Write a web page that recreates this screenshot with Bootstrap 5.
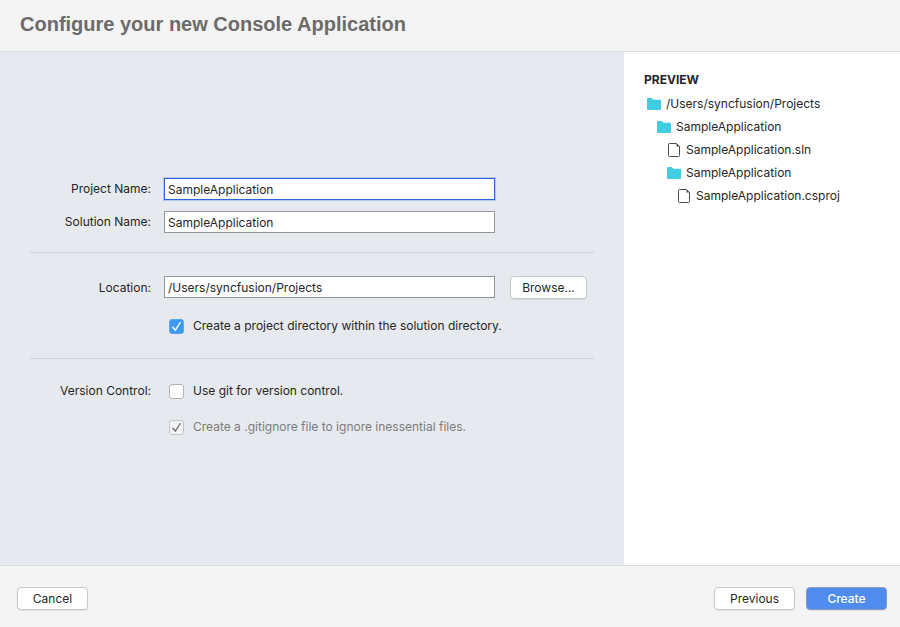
<!DOCTYPE html>
<html lang="en">
<head>
<meta charset="utf-8">
<meta name="viewport" content="width=device-width, initial-scale=1">
<title>Configure your new Console Application</title>
<link href="https://cdn.jsdelivr.net/npm/bootstrap@5.3.0/dist/css/bootstrap.min.css" rel="stylesheet">
<style>
  body { font-family: Inter, "Liberation Sans", sans-serif; font-size: 12px; line-height: 18px; color: #262626; background: #f4f4f4; }
  .wizard-head { padding: 12px 20px 15px; border-bottom: 1px solid #dcdee1; }
  .wizard-title { font-family: "Liberation Sans", sans-serif; font-size: 20px; line-height: 24px; color: #6b6b6b; }
  .settings { background: #e6e9ee; padding: 0 30px 3px; }
  .preview { background: #fff; width: 276px; padding: 18px 20px; }
  .preview-title { font-size: 12px; line-height: 20px; margin-bottom: 2px; }
  .rule { height: 1px; background: #cfd2d7; }
  .gap-field { gap: 11px; }
  .field-label { width: 121px; margin-right: 13px; text-align: right; }
  .side { width: 77px; margin: 0 7px 0 15px; }
  .field { height: 22px; padding: 0 3px; border: 1px solid #959595; border-radius: 0; font-size: 12px; line-height: 18px; color: #262626; }
  .field:focus, .field.active { border-color: #2b66d9; box-shadow: 0 0 0 1px #b4c8ec; color: #262626; }
  .mac-btn { height: 23px; padding: 0; border: 1px solid #c8c8c8; border-radius: 4px; background: #fff; font-size: 12px; line-height: 20px; color: #262626; box-shadow: 0 1px 1px rgba(0,0,0,.08); }
  .mac-btn.primary { background: #4f8cee; border-color: #8c9cb8; color: #fff; font-weight: 500; }
  .tick-row { gap: 9px; padding-left: 5px; }
  .form-check-input.tick { width: 15px; height: 15px; margin: 0; border: 1px solid #b3b3b3; border-radius: 3px; background-color: #fff; background-size: 15px 15px; }
  .form-check-input.tick:checked { border-color: #5ba7ee; background-color: #3d9af4; background-image: url("data:image/svg+xml,%3Csvg xmlns='http://www.w3.org/2000/svg' viewBox='0 0 15 15'%3E%3Cpath d='M3.800 8.200l2.600 3L11.200 3.500' fill='none' stroke='%23fff' stroke-width='1.4' stroke-linecap='round' stroke-linejoin='round'/%3E%3C/svg%3E"); }
  .form-check-input.tick:disabled { opacity: 1; border-color: #c6c6c8; background-color: #f2f3f4; background-image: url("data:image/svg+xml,%3Csvg xmlns='http://www.w3.org/2000/svg' viewBox='0 0 15 15'%3E%3Cpath d='M3.800 8.200l2.600 3L11.200 3.500' fill='none' stroke='%23777' stroke-width='1.4' stroke-linecap='round' stroke-linejoin='round'/%3E%3C/svg%3E"); }
  .form-check-input.tick:disabled ~ label { opacity: 1; color: #7d7d7f; }
  .above-18 { margin-top: 18px; }
  .above-19 { margin-top: 19px; }
  .above-23 { margin-top: 23px; }
  .tree li { line-height: 23px; }
  .tree ul { padding-left: 10px; }
  .node { padding-left: 2px; gap: 4px; }
  .wizard-foot { padding: 21px 13px 17px 17px; border-top: 1px solid #dcdcdc; }
  .w-71 { width: 71px; }
  .w-81 { width: 81px; }
  .gap-11 { gap: 11px; }
</style>
</head>
<body class="d-flex flex-column min-vh-100">
<svg class="d-none" aria-hidden="true">
  <symbol id="folder" viewBox="0 0 16 14"><path d="M1 2Q1 1 2 1H5.600L7.600 2.800H14Q15 2.800 15 3.800V12Q15 13 14 13H2Q1 13 1 12Z" fill="#42cce2"/></symbol>
  <symbol id="file" viewBox="0 0 16 14"><path d="M3.500 .5H10.500L13.500 3.500V12.500Q13.500 13.500 12.500 13.500H3.500Q2.500 13.500 2.500 12.500V1.500Q2.500 .5 3.500 .5Z" fill="#fff" stroke="#4c4c4c"/><path d="M10.500 .5V3.500H13.500Z" fill="#4c4c4c"/></symbol>
</svg>
<header class="wizard-head">
  <h1 class="wizard-title fw-bold m-0">Configure your new Console Application</h1>
</header>
<main class="d-flex flex-grow-1">
  <form class="settings flex-grow-1 d-flex flex-column justify-content-center" id="wizard">
    <div class="d-flex flex-column gap-field">
      <div class="d-flex align-items-center">
        <label class="field-label flex-shrink-0" for="project">Project Name:</label>
        <input class="form-control field active" id="project" type="text" value="SampleApplication">
        <div class="side flex-shrink-0"></div>
      </div>
      <div class="d-flex align-items-center">
        <label class="field-label flex-shrink-0" for="solution">Solution Name:</label>
        <input class="form-control field" id="solution" type="text" value="SampleApplication">
        <div class="side flex-shrink-0"></div>
      </div>
    </div>
    <div class="rule above-19"></div>
    <div class="d-flex above-23 align-items-center">
      <label class="field-label flex-shrink-0" for="location">Location:</label>
      <input class="form-control field align-self-start" id="location" type="text" value="/Users/syncfusion/Projects">
      <button class="btn mac-btn side flex-shrink-0" type="button">Browse...</button>
    </div>
    <div class="d-flex above-18">
      <div class="field-label flex-shrink-0"></div>
      <div class="d-flex align-items-center tick-row">
        <input class="form-check-input tick" id="directory" type="checkbox" checked>
        <label for="directory">Create a project directory within the solution directory.</label>
      </div>
    </div>
    <div class="rule above-23"></div>
    <div class="d-flex above-23">
      <div class="field-label flex-shrink-0">Version Control:</div>
      <div class="d-flex align-items-center tick-row">
        <input class="form-check-input tick" id="git" type="checkbox">
        <label for="git">Use git for version control.</label>
      </div>
    </div>
    <div class="d-flex above-18">
      <div class="field-label flex-shrink-0"></div>
      <div class="d-flex align-items-center tick-row">
        <input class="form-check-input tick" id="ignore" type="checkbox" checked disabled>
        <label for="ignore">Create a .gitignore file to ignore inessential files.</label>
      </div>
    </div>
  </form>
  <aside class="preview flex-shrink-0">
    <h2 class="preview-title fw-bold">PREVIEW</h2>
    <ul class="tree list-unstyled m-0">
      <li><div class="node d-flex align-items-center"><svg width="16" height="14"><use href="#folder"/></svg>/Users/syncfusion/Projects</div>
        <ul class="list-unstyled">
          <li><div class="node d-flex align-items-center"><svg width="16" height="14"><use href="#folder"/></svg>SampleApplication</div>
            <ul class="list-unstyled">
              <li><div class="node d-flex align-items-center"><svg width="16" height="14"><use href="#file"/></svg>SampleApplication.sln</div></li>
              <li><div class="node d-flex align-items-center"><svg width="16" height="14"><use href="#folder"/></svg>SampleApplication</div>
                <ul class="list-unstyled">
                  <li><div class="node d-flex align-items-center"><svg width="16" height="14"><use href="#file"/></svg>SampleApplication.csproj</div></li>
                </ul>
              </li>
            </ul>
          </li>
        </ul>
      </li>
    </ul>
  </aside>
</main>
<footer class="wizard-foot d-flex justify-content-between">
  <button class="btn mac-btn w-71" type="button">Cancel</button>
  <div class="d-flex gap-11">
    <button class="btn mac-btn w-81" type="button">Previous</button>
    <button class="btn mac-btn primary w-81" type="submit" form="wizard">Create</button>
  </div>
</footer>
<script src="https://cdn.jsdelivr.net/npm/bootstrap@5.3.0/dist/js/bootstrap.bundle.min.js"></script>
</body>
</html>
